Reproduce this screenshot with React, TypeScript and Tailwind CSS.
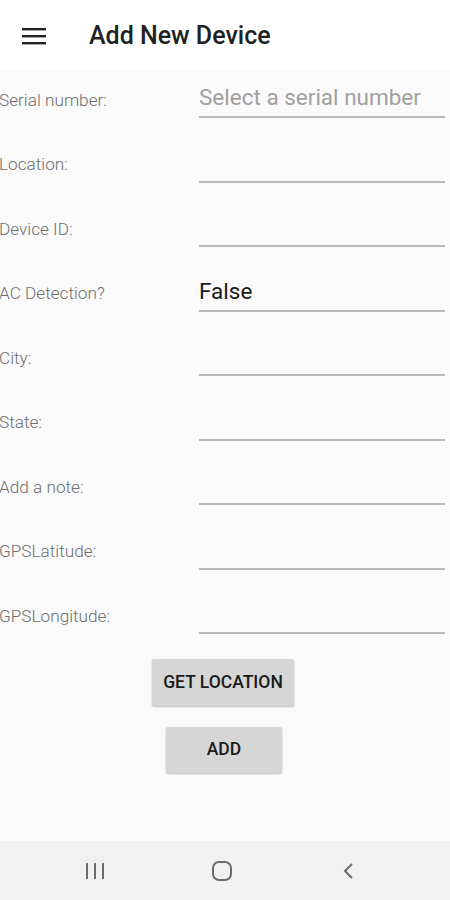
import React from 'react';

const rows = [
  { label: 'Serial number:', value: 'Select a serial number', placeholder: true },
  { label: 'Location:' },
  { label: 'Device ID:' },
  { label: 'AC Detection?', value: 'False' },
  { label: 'City:' },
  { label: 'State:' },
  { label: 'Add a note:' },
  { label: 'GPSLatitude:' },
  { label: 'GPSLongitude:' },
];

export default function App() {
  return (
    <div className="w-[450px] h-[900px] flex flex-col bg-[#fafafa] font-['Roboto',sans-serif] overflow-hidden">
      {/* App bar */}
      <div className="h-[70px] bg-white flex items-center shrink-0">
        <svg width="24" height="18" viewBox="0 0 24 18" className="ml-[22px] mt-[1px]">
          <rect x="0" y="1" width="24" height="2.4" fill="#212121" />
          <rect x="0" y="8" width="24" height="2.4" fill="#212121" />
          <rect x="0" y="15" width="24" height="2.4" fill="#212121" />
        </svg>
        <h1 className="ml-[43px] mt-[2px] text-[25px] font-medium text-[#212121]">Add New Device</h1>
      </div>

      {/* Form */}
      <div className="flex-1 flex flex-col">
        {rows.map((r) => (
          <div key={r.label} className="h-[64.5px] flex shrink-0">
            <div className="w-[200px] h-[48px] flex items-center pt-[13px] text-[17.2px] font-light text-[#6e6e6e] -ml-[1px] whitespace-nowrap">
              {r.label}
            </div>
            <div className="w-[246px] h-[48px] border-b-2 border-[#b8b8b8] flex items-center pt-[10px]">
              <span className={`text-[22.5px] ${r.placeholder ? 'text-[#a0a0a0]' : 'text-[#1a1a1a]'}`}>
                {r.value ?? ''}
              </span>
            </div>
          </div>
        ))}

        <div className="flex flex-col items-center mt-[8px]">
          <button className="h-[47px] w-[142px] ml-[-4px] bg-[#d6d6d6] shadow-[0_1px_2px_rgba(0,0,0,0.25)] rounded-[2px] text-[17.5px] font-medium text-[#1a1a1a]">
            GET LOCATION
          </button>
          <button className="mt-[21px] h-[46px] w-[116px] ml-[-2px] bg-[#d6d6d6] shadow-[0_1px_2px_rgba(0,0,0,0.25)] rounded-[2px] text-[17.5px] font-medium text-[#1a1a1a]">
            ADD
          </button>
        </div>
      </div>

      {/* System nav bar */}
      <div className="h-[59px] bg-[#f1f1f1] flex items-center justify-center gap-[87px] pr-[6px] shrink-0">
        <div className="w-[40px] flex justify-center">
          <svg width="22" height="20" viewBox="0 0 22 20">
            <rect x="2" y="2" width="2" height="16" fill="#6b6b6b" />
            <rect x="10" y="2" width="2" height="16" fill="#6b6b6b" />
            <rect x="18" y="2" width="2" height="16" fill="#6b6b6b" />
          </svg>
        </div>
        <div className="w-[40px] flex justify-center">
          <svg width="22" height="22" viewBox="0 0 22 22">
            <rect x="2" y="2" width="18" height="18" rx="6" fill="none" stroke="#6b6b6b" strokeWidth="2" />
          </svg>
        </div>
        <div className="w-[40px] flex justify-center">
          <svg width="16" height="20" viewBox="0 0 16 20">
            <path d="M11 3 L4 10 L11 17" fill="none" stroke="#6b6b6b" strokeWidth="2" />
          </svg>
        </div>
      </div>
    </div>
  );
}
